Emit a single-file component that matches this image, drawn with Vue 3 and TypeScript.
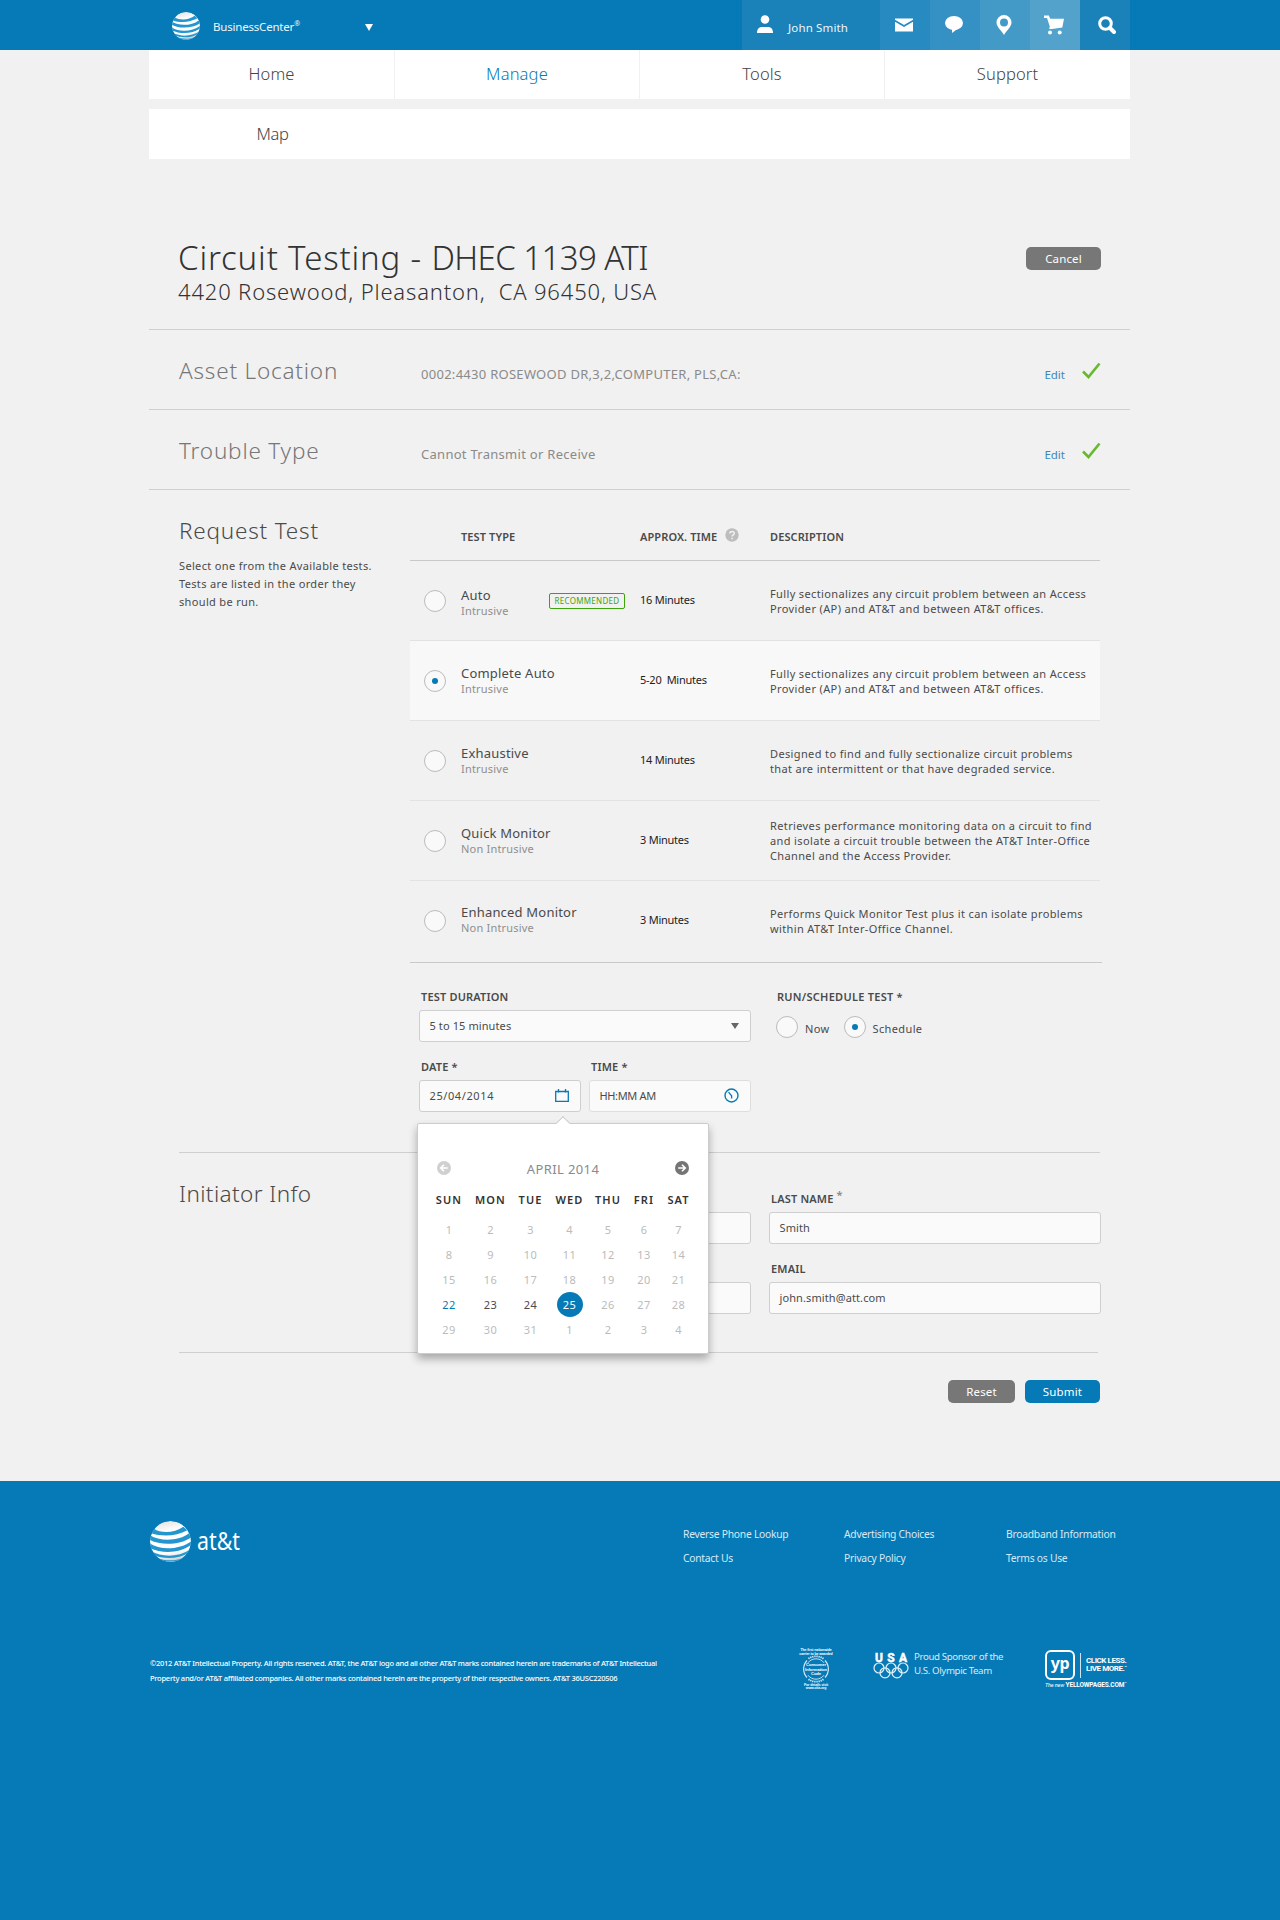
<script setup lang="ts">
import { ref } from 'vue'

interface Test { name: string; kind: string; time: string; lines: string[]; recommended?: boolean }
interface Day { n: number; state: string }

const nav = ['Home', 'Manage', 'Tools', 'Support']

const summaries = [
  { title: 'Asset Location', value: '0002:4430 ROSEWOOD DR,3,2,COMPUTER, PLS,CA:' },
  { title: 'Trouble Type', value: 'Cannot Transmit or Receive' },
]

const tests: Test[] = [
  { name: 'Auto', kind: 'Intrusive', time: '16 Minutes', recommended: true, lines: ['Fully sectionalizes any circuit problem between an Access', 'Provider (AP) and AT&T and between AT&T offices.'] },
  { name: 'Complete Auto', kind: 'Intrusive', time: '5-20  Minutes', lines: ['Fully sectionalizes any circuit problem between an Access', 'Provider (AP) and AT&T and between AT&T offices.'] },
  { name: 'Exhaustive', kind: 'Intrusive', time: '14 Minutes', lines: ['Designed to find and fully sectionalize circuit problems', 'that are intermittent or that have degraded service.'] },
  { name: 'Quick Monitor', kind: 'Non Intrusive', time: '3 Minutes', lines: ['Retrieves performance monitoring data on a circuit to find', 'and isolate a circuit trouble between the AT&T Inter-Office', 'Channel and the Access Provider.'] },
  { name: 'Enhanced Monitor', kind: 'Non Intrusive', time: '3 Minutes', lines: ['Performs Quick Monitor Test plus it can isolate problems', 'within AT&T Inter-Office Channel.'] },
]
const selectedTest = ref('Complete Auto')
const runMode = ref('Schedule')

const weekdays = ['SUN', 'MON', 'TUE', 'WED', 'THU', 'FRI', 'SAT']
const days: Day[] = Array.from({ length: 35 }, (_, i) => {
  const n = i < 31 ? i + 1 : i - 30
  const state = i === 21 ? 'today' : i === 22 || i === 23 ? 'open' : i === 24 ? 'picked' : 'off'
  return { n, state }
})

const footerLinks = ['Reverse Phone Lookup', 'Advertising Choices', 'Broadband Information', 'Contact Us', 'Privacy Policy', 'Terms os Use']
</script>

<template>
  <div class="page">
    <header class="top">
      <div class="brand">
        <svg class="globe-small" viewBox="0 0 40 40"><use href="#globe" /></svg>
        <span class="brand-name">BusinessCenter<sup>®</sup></span>
        <i class="caret caret-light"></i>
      </div>
      <div class="user">
        <svg width="16" height="18" viewBox="0 0 16 18" fill="#fff"><circle cx="8" cy="4.5" r="4.3" /><path d="M0 18c0-4 2-6 5-6h6c3 0 5 2 5 6z" /></svg>
        <span>John Smith</span>
      </div>
      <div class="tile t1"><svg width="18" height="14" viewBox="0 0 18 14" fill="#fff"><path d="M0 .5h18v1.3L9 7 0 1.800z" /><path d="M0 3.800 9 9l9-5.200V13.500H0z" /></svg></div>
      <div class="tile t2"><svg width="18" height="17" viewBox="0 0 18 17" fill="#fff"><ellipse cx="9" cy="7" rx="9" ry="7" /><path d="M7 13v4l6-4.500z" /></svg></div>
      <div class="tile t3"><svg width="16" height="20" viewBox="0 0 16 20"><path fill="#fff" fill-rule="evenodd" d="M8 0a7.500 7.500 0 0 1 7.500 7.500C15.500 12 10 16 8 20 6 16 .5 12 .5 7.500A7.500 7.500 0 0 1 8 0zm0 3.500a4 4 0 1 0 0 8 4 4 0 0 0 0-8z" /></svg></div>
      <div class="tile t4"><svg width="20" height="20" viewBox="0 0 20 20" fill="#fff"><path d="M0 .5h4.800l1.500 3.300H20l-1.700 8.700L8 14H5.200L5.800 11.500 3 3H0z" /><circle cx="6" cy="17.500" r="2" /><circle cx="15.700" cy="17.500" r="2" /></svg></div>
      <div class="tile t5"><svg width="18" height="18" viewBox="0 0 18 18" fill="none" stroke="#fff"><circle cx="7.500" cy="7.500" r="5.800" stroke-width="3" /><path d="M12 12l4 4" stroke-width="4" stroke-linecap="round" /></svg></div>
    </header>

    <main class="main">
      <nav class="nav">
        <a v-for="n in nav" :key="n" :class="{ active: n === 'Manage' }">{{ n }}</a>
      </nav>
      <nav class="subnav"><a>Map</a></nav>

      <section class="heading">
        <div class="heading-text">
          <h1><span class="wide">Circuit Testing - </span><span class="tight">DHEC 1139 ATI</span></h1>
          <p>4420 Rosewood, Pleasanton,&nbsp; CA 96450, USA</p>
        </div>
        <button class="btn grey cancel">Cancel</button>
      </section>

      <section v-for="s in summaries" :key="s.title" class="summary">
        <h2>{{ s.title }}</h2>
        <span class="value">{{ s.value }}</span>
        <a class="edit">Edit</a>
        <svg class="check" width="20" height="18" viewBox="0 0 20 18" fill="none" stroke="#67b92e" stroke-width="2.600"><path d="M2 9.500 7.500 15 18.500 1.500" /></svg>
      </section>

      <section class="block request">
        <div class="side">
          <h2>Request Test</h2>
          <p>Select one from the Available tests.<br />Tests are listed in the order they<br />should be run.</p>
        </div>
        <div class="body">
          <div class="thead">
            <span class="c-name">TEST TYPE</span>
            <span class="c-time">APPROX. TIME <svg class="help" width="14" height="14" viewBox="0 0 14 14"><circle cx="7" cy="7" r="6.700" fill="#bdbdbd" /><path d="M4.800 5.600c0-2.900 4.500-2.900 4.500-.2 0 1.500-2.200 1.500-2.200 3.100M7.100 9.700v1.500" fill="none" stroke="#f1f1f1" stroke-width="1.500" /></svg></span>
            <span>DESCRIPTION</span>
          </div>
          <div v-for="t in tests" :key="t.name" class="trow" :class="{ on: t.name === selectedTest }" @click="selectedTest = t.name">
            <i class="radio" :class="{ checked: t.name === selectedTest }"></i>
            <div class="c-name">
              <div class="names"><div class="name">{{ t.name }}</div><div class="kind">{{ t.kind }}</div></div>
              <span v-if="t.recommended" class="badge">RECOMMENDED</span>
            </div>
            <span class="c-time time">{{ t.time }}</span>
            <div class="desc"><div v-for="l in t.lines" :key="l">{{ l }}</div></div>
          </div>

          <div class="form">
            <div class="form-left">
              <label>TEST DURATION</label>
              <div class="input select"><span>5 to 15 minutes</span><i class="caret caret-dark"></i></div>
              <div class="pair">
                <div class="field">
                  <label>DATE *</label>
                  <div class="input date">
                    <span>25/04/2014</span>
                    <svg width="14" height="13" viewBox="0 0 14 13" fill="none" stroke="#067ab7"><path d="M.7 2.500h12.600v9.800H.7z" stroke-width="1.300" /><path d="M3.500 0v3.500M10.500 0v3.500" stroke-width="1.300" /></svg>
                  </div>
                  <div class="calendar">
                    <div class="cal-head">
                      <svg width="14" height="14" viewBox="0 0 14 14"><circle cx="7" cy="7" r="7" fill="#d0d0d0" /><path d="M10.800 7H4M7 3.700 3.700 7 7 10.300" fill="none" stroke="#fff" stroke-width="1.600" /></svg>
                      <span>APRIL 2014</span>
                      <svg width="14" height="14" viewBox="0 0 14 14"><circle cx="7" cy="7" r="7" fill="#757575" /><path d="M3.200 7H10M7 3.700 10.300 7 7 10.300" fill="none" stroke="#fff" stroke-width="1.600" /></svg>
                    </div>
                    <div class="cal-grid week"><b v-for="w in weekdays" :key="w">{{ w }}</b></div>
                    <div class="cal-grid days"><span v-for="(d, i) in days" :key="i" :class="d.state">{{ d.n }}</span></div>
                  </div>
                </div>
                <div class="field">
                  <label>TIME *</label>
                  <div class="input pale">
                    <span>HH:MM AM</span>
                    <svg width="15" height="15" viewBox="0 0 15 15" fill="none" stroke="#067ab7"><circle cx="7.500" cy="7.500" r="6.500" stroke-width="1.400" /><path d="M4.500 4.200 7.600 7.800V10.500" stroke-width="1.300" /></svg>
                  </div>
                </div>
              </div>
            </div>
            <div class="form-right">
              <label>RUN/SCHEDULE TEST *</label>
              <div class="radios">
                <i class="radio" :class="{ checked: runMode === 'Now' }" @click="runMode = 'Now'"></i><span>Now</span>
                <i class="radio" :class="{ checked: runMode === 'Schedule' }" @click="runMode = 'Schedule'"></i><span>Schedule</span>
              </div>
            </div>
          </div>
        </div>
      </section>

      <section class="block initiator">
        <div class="side"><h2>Initiator Info</h2></div>
        <div class="info">
          <div class="field"><label></label><div class="input"></div></div>
          <div class="field"><label>LAST NAME <sup class="req">*</sup></label><div class="input"><span>Smith</span></div></div>
          <div class="field"><label></label><div class="input"></div></div>
          <div class="field"><label>EMAIL</label><div class="input"><span>john.smith@att.com</span></div></div>
        </div>
      </section>

      <div class="actions">
        <button class="btn grey reset">Reset</button>
        <button class="btn blue">Submit</button>
      </div>
    </main>

    <footer class="footer">
      <div class="foot-top">
        <div class="logo">
          <svg width="41" height="41" viewBox="0 0 40 40">
            <defs>
              <linearGradient id="ball" x1=".4" y1="0" x2=".6" y2="1"><stop offset="0" stop-color="#e4e4e4" /><stop offset=".25" stop-color="#fff" /><stop offset=".75" stop-color="#fff" /><stop offset="1" stop-color="#c4c9cc" /></linearGradient>
              <clipPath id="round"><circle cx="20" cy="20" r="20" /></clipPath>
            </defs>
            <g id="globe" clip-path="url(#round)">
              <circle cx="20" cy="20" r="20" fill="url(#ball)" />
              <g fill="#2496cf">
                <path d="M4 7.500C10 12 24 12 32.500 5.500L36.500 9C26 15 12 15.500 1 12z" />
                <path d="M0 14C10 20.500 29 19.500 38 12L40 16C29 23.500 11 24 0 18.500z" />
                <path d="M0 22C10 29 29 28 40 20L40 23.500C29 31.500 12 32 0 26.500z" />
                <path d="M1 29.300C12 35.800 28 35.200 39 28L38 31C28 37.300 13 37.800 3 33z" />
                <path d="M6 35.500C15 39.300 26 39.300 34.500 35L33 36.600C26 40.300 15 40.300 8 37.500z" />
              </g>
            </g>
          </svg>
          <span class="wordmark">at&amp;t</span>
        </div>
        <div class="links"><a v-for="l in footerLinks" :key="l">{{ l }}</a></div>
      </div>
      <div class="foot-bottom">
        <p class="legal">©2012 AT&amp;T Intellectual Property. All rights reserved. AT&amp;T, the AT&amp;T logo and all other AT&amp;T marks contained herein are trademarks of AT&amp;T Intellectual<br />Property and/or AT&amp;T affiliated companies. All other marks contained herein are the property of their respective owners. AT&amp;T 36USC220506</p>
        <svg class="seal" width="36" height="44" viewBox="-4 -1 36 44" fill="none" stroke="#d6e8f4">
          <path d="M5 12.500A12.400 12.400 0 0 0 5 29.500M23 12.500A12.400 12.400 0 0 1 23 29.500" stroke-width="1.200" />
          <path d="M6.500 10.800a12.400 12.400 0 0 1 15 0M6.500 31.200a12.400 12.400 0 0 0 15 0" stroke-width="1.800" stroke-dasharray="1.300 .8" />
          <path d="M6 14.800a10 10 0 0 1 16 0M6 27.200a10 10 0 0 0 16 0" stroke-width=".9" />
          <g class="seal-text" fill="#fff" stroke="none" text-anchor="middle">
            <text x="14" y="3">The first nationwide</text><text x="14" y="6.600">carrier to be awarded</text>
            <text class="mid" x="14" y="18.300">Consumer</text><text class="mid" x="14" y="22.500">Information</text><text class="mid" x="14" y="26.700">Code</text>
            <text x="14" y="38">For details visit</text><text x="14" y="41.300">www.ctia.org</text>
          </g>
        </svg>
        <svg class="usa" width="36" height="27" viewBox="0 0 36 27" fill="none" stroke="#e6f1f8" stroke-width="1.200">
          <g class="usa-text" fill="#fff" stroke="#fff" stroke-width=".5" text-anchor="middle"><text x="6" y="9.500">U</text><text x="18" y="9.500">S</text><text x="30" y="9.500">A</text></g>
          <circle cx="6" cy="16" r="5" /><circle cx="18" cy="16" r="5" /><circle cx="30" cy="16" r="5" /><circle cx="12" cy="20.800" r="5" /><circle cx="24" cy="20.800" r="5" />
        </svg>
        <p class="sponsor">Proud Sponsor of the<br />U.S. Olympic Team</p>
        <div class="yp">
          <div class="yp-row"><span class="yp-box">yp</span><i></i><b>CLICK LESS.<br />LIVE MORE.<small>™</small></b></div>
          <div class="yp-line"><em>The new</em> <b>YELLOWPAGES.COM</b><small>™</small></div>
        </div>
      </div>
    </footer>
  </div>
</template>

<style>
body { background: #f1f1f1; }
</style>

<style scoped>
.page { width: 1280px; height: 1920px; overflow: hidden; background: #f1f1f1; color: #4a4a4a; font-family: "Noto Sans", "Open Sans", sans-serif; font-size: 11px; letter-spacing: .37px; }
h1, h2, p { margin: 0; font-weight: 300; }
.top { height: 50px; background: #067ab7; display: flex; padding: 0 150px 0 149px; color: #fff; }
.brand { width: 593px; display: flex; align-items: center; }
.globe-small { width: 28px; height: 28px; margin: 1px 13px 0 23px; }
.brand-name { font-size: 11.500px; width: 152px; letter-spacing: -.2px; padding-top: 2px; color: #eef6fb; }
.user { width: 138px; box-sizing: border-box; padding-left: 15px; display: flex; align-items: center; gap: 15px; background: #1a82b8; font-size: 11.500px; letter-spacing: .15px; color: #eef6fb; }
.user span { padding-top: 4px; }
.user svg { margin-bottom: 2px; }
.tile { width: 50px; display: flex; align-items: center; justify-content: center; }
.t1 { background: #278ac0; } .t2 { background: #3591c4; } .t3 { background: #439ac6; } .t4 { background: #52a2cb; } .t5 { background: #1a82b8; }
.tile svg { margin: 0 2px 1px 0; }
.t5 svg { margin: 0 0 1px 3px; }
sup { font-size: 7px; line-height: 0; }
.req { font-size: 11px; color: #8a8a8a; vertical-align: 4px; }
.caret { border: 4px solid transparent; border-top: 7px solid #fff; border-bottom: 0; }
.caret-light { margin-top: 4px; }
.caret-dark { border-top: 6px solid #666; }
.main { margin: 0 150px 0 149px; height: 1431px; }
.nav { display: grid; grid-template-columns: 246px 245px 245px 245px; height: 49px; background: #fff; }
.nav a, .subnav a { text-align: center; line-height: 48px; font-size: 16.500px; font-weight: 300; color: #444; letter-spacing: .15px; }
.nav a { border-right: 1px solid #f1f1f1; }
.nav a:last-child { border: 0; }
.nav a.active { color: #067ab7; }
.subnav { margin-top: 10px; height: 50px; background: #fff; }
.subnav a { display: block; width: 247px; line-height: 49px; letter-spacing: -.3px; }
.heading { box-sizing: border-box; height: 171px; border-bottom: 1px solid #cfcfcf; display: flex; justify-content: space-between; padding: 80px 29px 0; }
h1 { font-size: 33px; line-height: 38px; color: #333; white-space: pre; }
.wide { letter-spacing: .83px; } .tight { letter-spacing: -.6px; }
.heading p { font-size: 22px; line-height: 28px; color: #333; letter-spacing: .83px; }
.btn { font: 11.500px "Noto Sans", sans-serif; letter-spacing: .15px; color: #fff; border: 0; border-radius: 5px; height: 23px; width: 75px; padding: 0; }
.grey { background: #777; } .blue { background: #067ab7; } .reset { width: 67px; }
.cancel { margin-top: 8px; }
.summary { box-sizing: border-box; height: 80px; border-bottom: 1px solid #cfcfcf; display: flex; align-items: baseline; padding: 1px 29px 0 30px; line-height: 80px; }
.summary h2 { width: 242px; color: #777; }
h2 { font-size: 22.500px; letter-spacing: .8px; }
.initiator h2 { letter-spacing: .4px; }
.value { flex: 1; font-size: 13px; color: #8a8a8a; letter-spacing: .28px; }
.edit { font-size: 11.500px; color: #3a88bd; letter-spacing: 0; margin-right: 16px; }
.check { align-self: center; margin-top: 1px; }
.block { display: flex; margin-left: 30px; border-bottom: 1px solid #cfcfcf; }
.side { width: 231px; padding-top: 21px; flex-shrink: 0; }
.side h2 { line-height: 40px; }
.side p { line-height: 18px; margin-top: 6px; font-weight: 400; letter-spacing: .34px; }
.request { margin-right: 30px; height: 662px; }
.body { width: 690px; }
.thead { box-sizing: border-box; height: 71px; padding: 23px 0 0 51px; border-bottom: 1px solid #c9c9c9; display: flex; align-items: center; font-weight: 600; letter-spacing: .1px; }
.help { margin: -3px 0 0 8px; }
.c-name { width: 179px; display: flex; justify-content: space-between; align-items: center; }
.c-time { width: 130px; display: flex; align-items: center; }
.trow { box-sizing: border-box; height: 80px; border-bottom: 1px solid #e2e2e2; display: flex; align-items: center; }
.trow.on { background: #f8f8f8; }
.trow:nth-child(2) .names { padding-top: 3px; }
.trow:nth-child(6) { height: 82px; width: 692px; border-color: #c9c9c9; padding-bottom: 2px; }
.trow:nth-child(6) .names { padding-bottom: 2px; }
.radio { box-sizing: border-box; width: 22px; height: 22px; border: 1px solid #bbb; border-radius: 50%; background: #f9f9f9; display: flex; align-items: center; justify-content: center; }
.radio.checked::after { content: ""; width: 6px; height: 6px; border-radius: 50%; background: #067ab7; }
.trow .radio { margin: 0 15px 0 14px; }
.name { font-size: 13px; line-height: 16px; letter-spacing: .2px; }
.kind { line-height: 15px; color: #8f8f8f; letter-spacing: .2px; }
.badge { border: 1px solid #3da40b; border-radius: 2px; color: #3da40b; font-size: 8px; line-height: 14px; width: 74px; text-align: center; margin-right: 15px; letter-spacing: .3px; }
.time { color: #222; white-space: pre; letter-spacing: -.25px; margin-top: -2px; }
.desc { line-height: 15px; white-space: nowrap; }
.form { display: flex; padding: 26px 0 0 9px; }
.form-left { width: 332px; margin-right: 26px; }
label { display: block; height: 16px; line-height: 16px; padding-left: 2px; margin-bottom: 5px; font-weight: 600; letter-spacing: .17px; }
.input { box-sizing: border-box; height: 32px; border: 1px solid #cfcfcf; border-radius: 3px; background: #fafafa; display: flex; align-items: center; justify-content: space-between; padding: 0 11px 1px 9.500px; letter-spacing: .1px; }
.date { letter-spacing: .6px; }
.pale { border-color: #dedede; letter-spacing: -.35px; }
.pair { display: flex; gap: 8px; margin-top: 17px; }
.field { flex: 1; position: relative; }
.form-right label { padding: 0; margin-bottom: 11px; letter-spacing: .27px; }
.radios { display: flex; align-items: center; margin-left: -1px; }
.radios span { margin: 2px 14px 0 7px; }
.calendar { position: absolute; left: -2px; top: 64px; width: 292px; height: 231px; box-sizing: border-box; border: 1px solid #ccc; border-radius: 2px; background: #fff; box-shadow: 0 5px 8px rgba(0,0,0,.3); z-index: 2; }
.calendar::before { content: ""; position: absolute; left: 140px; top: -6px; width: 10px; height: 10px; background: #fff; border: 1px solid #ccc; border-width: 1px 0 0 1px; transform: rotate(45deg); box-sizing: border-box; }
.cal-head { display: flex; justify-content: space-between; align-items: center; padding: 37px 19px 0 19px; height: 14px; font-size: 13px; color: #8a8a8a; }
.cal-head span { padding-top: 2px; letter-spacing: .4px; }
.cal-grid { display: grid; grid-template-columns: 42px 41px 39px 39px 38px 34px 35px; justify-items: center; padding-left: 10px; line-height: 25px; }
.days .off { color: #bbb; } .days .today { color: #067ab7; } .days .picked { color: #fff; background: #067ab7; border-radius: 50%; width: 26px; text-align: center; }
.week { margin: 12px 0 5px; letter-spacing: 1.100px; }
.week b { font-weight: 600; color: #333; }
.initiator { height: 199px; margin-right: 32px; }
.info { display: grid; grid-template-columns: 332px 332px; gap: 17px 18px; padding: 38px 0 0 9px; height: 123px; }
.info .field { flex: none; }
.actions { display: flex; gap: 10px; justify-content: flex-end; padding: 27px 30px 0; }
.footer { height: 439px; background: #067ab7; padding: 40px 150px 0 150px; box-sizing: border-box; color: #d9e9f4; letter-spacing: 0; }
.foot-top { display: flex; align-items: flex-start; height: 127px; }
.logo { display: flex; align-items: center; gap: 6px; width: 533px; height: 41px; color: #fff; }
.wordmark { font-size: 26px; line-height: 38px; transform: scaleX(.82); transform-origin: left; padding-bottom: 3px; }
.links { display: grid; grid-template-columns: 161px 162px auto; line-height: 24px; font-size: 10.300px; letter-spacing: -.25px; padding-top: 1px; }
.foot-bottom { display: flex; align-items: flex-start; }
.legal { width: 648px; font-size: 7.500px; line-height: 14.500px; font-weight: 500; white-space: nowrap; letter-spacing: -.25px; margin-top: 8px; color: #fff; }
.seal { margin-top: -1px; }
.seal-text { font: 700 3.500px "Liberation Sans", sans-serif; letter-spacing: -.1px; }
.mid { font-size: 4.200px; }
.usa { margin: 4px 5px 0 39px; }
.usa-text { font: 700 12px Roboto, sans-serif; }
.sponsor { width: 131px; font-size: 9.700px; line-height: 14px; letter-spacing: -.38px; margin-top: 2px; font-weight: 400; }
.yp { color: #fff; white-space: nowrap; padding-top: 2px; font-family: Roboto, sans-serif; }
.yp-row { display: flex; align-items: center; font-size: 8px; line-height: 8.500px; letter-spacing: -.45px; }
.yp-row i { width: 1px; height: 25px; background: #cfe3f0; margin: 0 5px; }
.yp-box { box-sizing: border-box; width: 30px; height: 30px; border: 2px solid #fff; border-radius: 6px; font: 700 16px/23px "Noto Sans", sans-serif; text-align: center; }
.yp-line { font-size: 6.500px; line-height: 10px; letter-spacing: -.15px; }
.yp-line em { font-size: 5.500px; }
.yp small { font-size: 4px; vertical-align: 2px; line-height: 0; }
</style>
